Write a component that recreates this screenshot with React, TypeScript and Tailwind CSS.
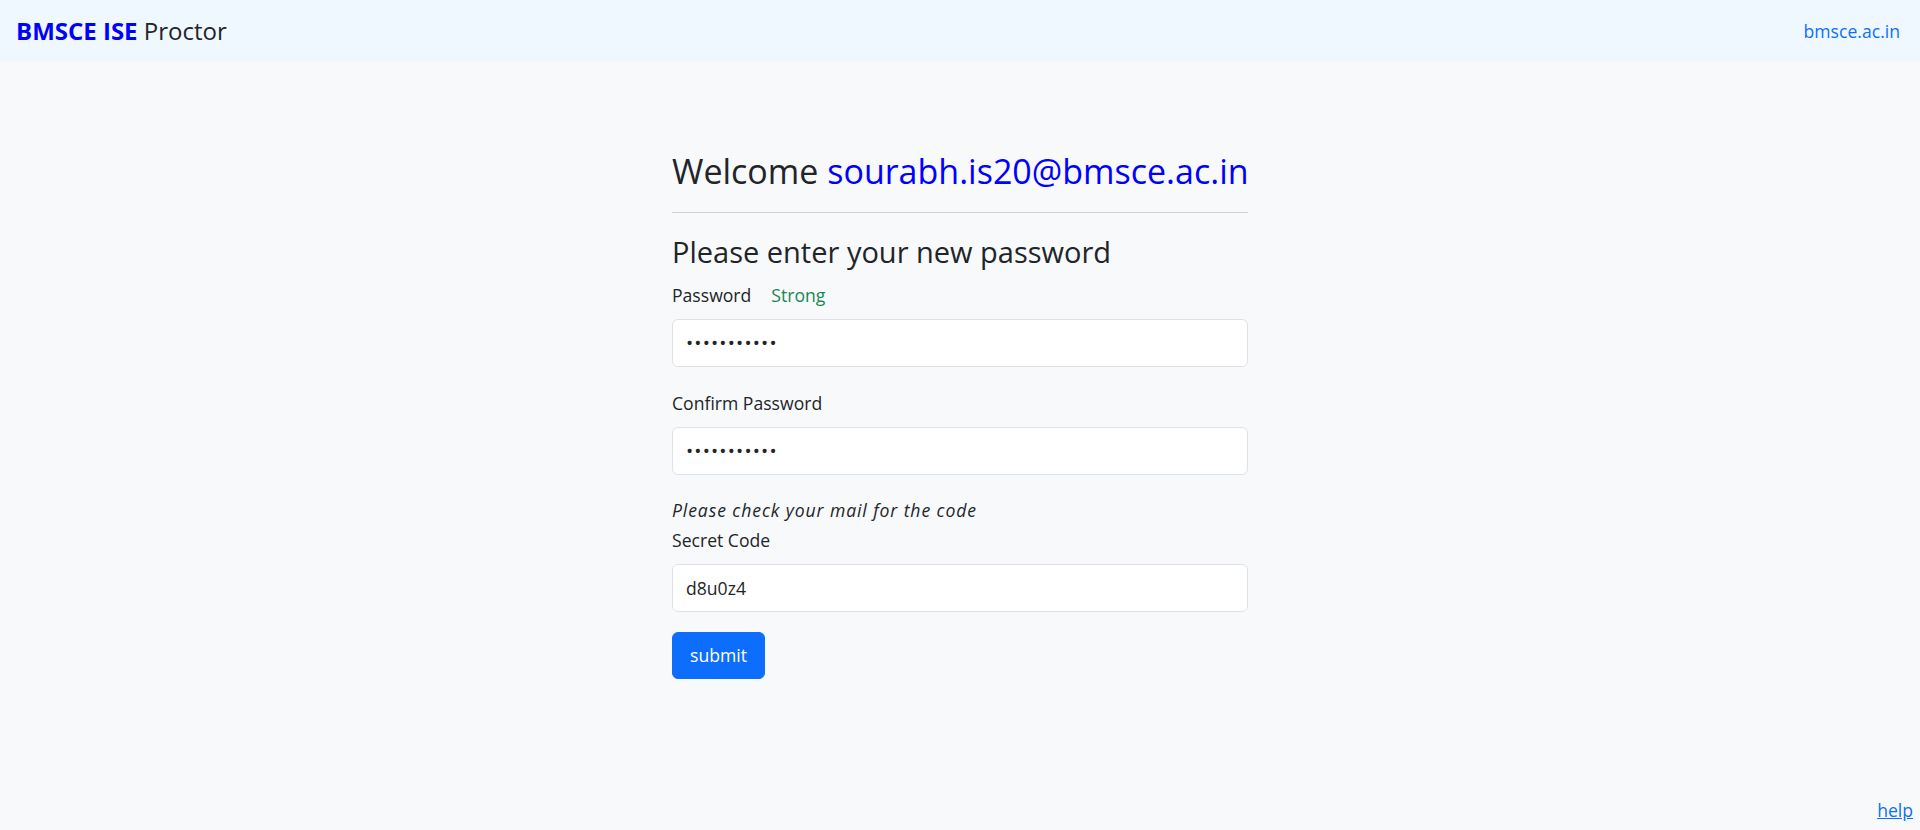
export default function App() {
  return (
    <div
      className="flex min-h-screen flex-col bg-[#f8f9fa] text-[#212529]"
      style={{ fontFamily: '"Open Sans", "Noto Sans", sans-serif' }}
    >
      <nav className="flex h-[62px] items-center justify-between bg-[#f0f8ff] px-4">
        <a href="#" className="text-[24px] leading-[32px] text-[#212529]">
          <span className="font-bold text-[#0000ff]">BMSCE ISE</span> Proctor
        </a>
        <a href="#" className="pr-1 text-[17.6px] leading-[26px] text-[#0d6efd]">
          bmsce.ac.in
        </a>
      </nav>

      <main className="flex-1">
        <div className="mx-auto w-[576px] pt-[88px]">
          <h2 className="h-[42px] whitespace-nowrap text-[34px] leading-[42px]">
            Welcome <span className="text-[#0000ff]">sourabh.is20@bmsce.ac.in</span>
          </h2>
          <hr className="mt-[20px] border-0 border-t border-[#cfd0d1]" />
          <h3 className="mt-[21px] h-[36px] whitespace-nowrap text-[29px] leading-[36px]">
            Please enter your new password
          </h3>

          <form>
            <div className="mt-[12px] flex h-[26px] items-center gap-5 text-[17.6px] leading-[26px]">
              <label>Password</label>
              <span className="text-[#198754]">Strong</span>
            </div>
            <input
              type="password"
              readOnly
              defaultValue="abcdefghijk"
              className="mt-[11px] block h-[48px] w-full rounded-[6px] border border-[#dee2e6] bg-white px-[13px] text-[19px] tracking-[1.2px] text-[#212529] outline-none"
            />

            <label className="mt-[23px] block h-[26px] text-[17.6px] leading-[26px]">
              Confirm Password
            </label>
            <input
              type="password"
              readOnly
              defaultValue="abcdefghijk"
              className="mt-[11px] block h-[48px] w-full rounded-[6px] border border-[#dee2e6] bg-white px-[13px] text-[19px] tracking-[1.2px] text-[#212529] outline-none"
            />

            <p className="mt-[22px] h-[26px] text-[17.6px] italic leading-[26px] tracking-[0.9px]">
              Please check your mail for the code
            </p>
            <label className="mt-[4px] block h-[26px] text-[17.6px] leading-[26px]">
              Secret Code
            </label>
            <input
              type="text"
              readOnly
              defaultValue="d8u0z4"
              className="mt-[11px] block h-[48px] w-full rounded-[6px] border border-[#dee2e6] bg-white px-[13px] text-[17.6px] text-[#212529] outline-none"
            />

            <button
              type="button"
              className="mt-[20px] block h-[47px] w-[93px] rounded-[6px] border border-[#0d6efd] bg-[#0d6efd] text-[17.6px] text-white"
            >
              submit
            </button>
          </form>
        </div>
      </main>

      <div className="flex justify-end pb-[7px] pr-[7px]">
        <a href="#" className="text-[17.6px] leading-[26px] text-[#0d6efd] underline">
          help
        </a>
      </div>
    </div>
  );
}
